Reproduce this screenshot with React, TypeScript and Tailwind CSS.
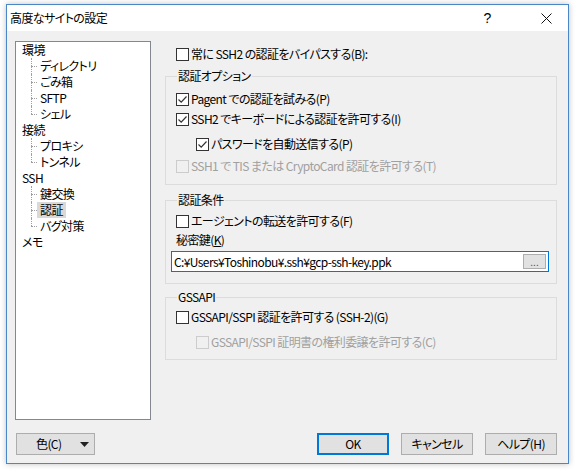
import React from 'react';

const FONT = "font-['Noto_Sans_CJK_JP','Liberation_Sans',sans-serif] [font-feature-settings:'palt'] tracking-[-0.6px]";

const TREE = [
  { label: '環境', children: ['ディレクトリ', 'ごみ箱', 'SFTP', 'シェル'] },
  { label: '接続', children: ['プロキシ', 'トンネル'] },
  { label: 'SSH', children: ['鍵交換', '認証', 'バグ対策'] },
  { label: 'メモ', children: [] as string[] },
];

function CheckBox({ checked, disabled }: { checked?: boolean; disabled?: boolean }) {
  return (
    <span
      className={`flex-shrink-0 w-[13px] h-[13px] border ${
        disabled ? 'border-[#cccccc] bg-[#f0f0f0]' : 'border-[#333333] bg-white'
      } flex items-center justify-center`}
    >
      {checked && (
        <svg width="11" height="11" viewBox="0 0 11 11">
          <path d="M1.5 5.5 L4.2 8.2 L9.5 2.5" fill="none" stroke="#333" strokeWidth="1.2" />
        </svg>
      )}
    </span>
  );
}

function CheckRow({
  label,
  checked,
  disabled,
  indent,
  className = '',
}: {
  label: string;
  checked?: boolean;
  disabled?: boolean;
  indent?: boolean;
  className?: string;
}) {
  return (
    <div className={`flex items-center h-[20px] ${indent ? 'pl-[20px]' : ''} ${className}`}>
      <CheckBox checked={checked} disabled={disabled} />
      <span className={`ml-[2px] ${disabled ? 'text-[#a0a0a0]' : 'text-black'}`}>{label}</span>
    </div>
  );
}

function Group({ title, className = '', children }: { title: string; className?: string; children: React.ReactNode }) {
  return (
    <fieldset className={`border border-[#dcdcdc] pl-[10px] ${className}`}>
      <legend className="ml-[1px] px-[1px] leading-[16px]">{title}</legend>
      {children}
    </fieldset>
  );
}

function Tree() {
  return (
    <div className="w-[136px] h-[379px] border border-[#828790] bg-white">
      {TREE.map((node) => (
        <div key={node.label}>
          <div className="h-[16px] leading-[16px] pl-[6px]">{node.label}</div>
          {node.children.map((child, i) => {
            const last = i === node.children.length - 1;
            const selected = child === '認証';
            return (
              <div key={child} className="flex h-[16px] pl-[15px]">
                <div className="flex flex-col w-[6px]">
                  <div className="h-[8px] border-l border-dotted border-[#a0a0a0]" />
                  <div
                    className={`h-[8px] border-t border-dotted border-[#a0a0a0] ${
                      last ? '' : 'border-l'
                    }`}
                  />
                </div>
                <span className={`leading-[16px] pl-[3px] pr-[3px] ${selected ? 'bg-[#d9d9d9]' : ''}`}>
                  {child}
                </span>
              </div>
            );
          })}
        </div>
      ))}
    </div>
  );
}

function Button({ children, primary, className = '' }: { children: React.ReactNode; primary?: boolean; className?: string }) {
  return (
    <div
      className={`h-[22px] flex items-center bg-[#e1e1e1] ${
        primary ? 'border-2 border-[#0078d7]' : 'border border-[#adadad]'
      } ${className}`}
    >
      {children}
    </div>
  );
}

export default function App() {
  return (
    <div className={`w-[575px] h-[470px] bg-white pt-[4px] pl-[6px] text-[12px] text-black ${FONT}`}>
      <div className="w-[563px] h-[460px] border border-[#4a86c8] bg-[#f0f0f0] shadow-[0_0_6px_rgba(0,0,0,0.25)] flex flex-col">
        {/* title bar */}
        <div className="h-[26px] bg-white flex items-center pl-[3px]">
          <span className="leading-[16px]">高度なサイトの設定</span>
          <span className="ml-auto w-[20px] text-center text-[14px] font-['Liberation_Sans',sans-serif]">?</span>
          <div className="w-[46px] ml-[26px] mr-[-1px] flex items-center justify-center">
            <svg width="11" height="11" viewBox="0 0 11 11">
              <path d="M0.5 0.5 L10.5 10.5 M10.5 0.5 L0.5 10.5" stroke="#111" strokeWidth="1" />
            </svg>
          </div>
        </div>

        {/* content */}
        <div className="flex-1 flex flex-col pl-[8px] pt-[10px]">
          <div className="flex">
            <Tree />
            <div className="ml-[14px] w-[392px] flex flex-col pt-[3px]">
              <CheckRow label="常に SSH2 の認証をバイパスする(B):" className="pl-[11px]" />

              <Group title="認証オプション" className="mt-[4px] pb-[8px]">
                <CheckRow label="Pagent での認証を試みる(P)" checked className="mt-[5px]" />
                <CheckRow label="SSH2 でキーボードによる認証を許可する(I)" checked />
                <CheckRow label="パスワードを自動送信する(P)" checked indent className="mt-[5px]" />
                <CheckRow label="SSH1 で TIS または CryptoCard 認証を許可する(T)" disabled className="mt-[2px]" />
              </Group>

              <Group title="認証条件" className="mt-[7px] pb-[11px]">
                <CheckRow label="エージェントの転送を許可する(F)" className="mt-[3px]" />
                <div className="h-[18px] leading-[18px]">
                  秘密鍵(<span className="underline">K</span>)
                </div>
                <div className="mt-[2px] ml-[-5px] w-[378px] h-[21px] border border-[#0078d7] bg-white flex items-center pl-[2px] pr-[2px]">
                  <span className="flex-1 leading-[16px]">
                    C:¥Users¥Toshinobu¥.ssh¥gcp-ssh-key.ppk
                  </span>
                  <div className="w-[23px] h-[15px] bg-[#e1e1e1] border border-[#adadad] flex items-end justify-center text-[10px] leading-[12px] text-[#555] tracking-normal">
                    ...
                  </div>
                </div>
              </Group>

              <Group title="GSSAPI" className="mt-[5px] pb-[7px]">
                <CheckRow label="GSSAPI/SSPI 認証を許可する (SSH-2)(G)" className="mt-[2px]" />
                <CheckRow label="GSSAPI/SSPI 証明書の権利委譲を許可する(C)" disabled indent className="mt-[5px]" />
              </Group>
            </div>
          </div>

          {/* buttons */}
          <div className="flex mt-[13px] pl-[1px] pr-[11px]">
            <Button className="w-[79px] pl-[19px] pr-[5px]">
              <span>色(C)</span>
              <svg className="ml-auto" width="9" height="5" viewBox="0 0 9 5">
                <path d="M0 0 L9 0 L4.5 5 Z" fill="#222" />
              </svg>
            </Button>
            <div className="flex-1" />
            <Button primary className="w-[72px] justify-center">OK</Button>
            <Button className="w-[72px] ml-[12px] justify-center">キャンセル</Button>
            <Button className="w-[72px] ml-[12px] justify-center">ヘルプ(H)</Button>
          </div>
        </div>
      </div>
    </div>
  );
}
